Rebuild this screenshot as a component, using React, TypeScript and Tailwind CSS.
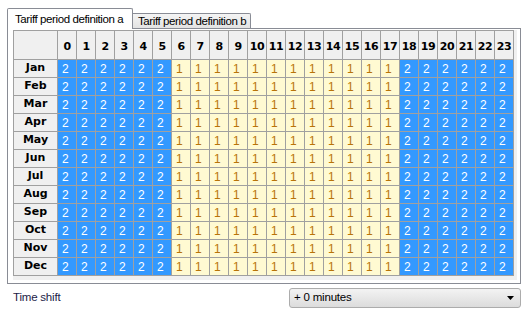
import React from 'react'

const MONTHS = ['Jan', 'Feb', 'Mar', 'Apr', 'May', 'Jun', 'Jul', 'Aug', 'Sep', 'Oct', 'Nov', 'Dec']
const HOURS = Array.from({ length: 24 }, (_, i) => i)

// hours 6..17 are period 1, the rest period 2
const periodOf = (h: number) => (h >= 6 && h <= 17 ? 1 : 2)

const UI_FONT = { fontFamily: '"Liberation Sans", Arial, sans-serif' }
const GRID_FONT = { fontFamily: '"DejaVu Sans", Verdana, sans-serif' }

const App = () => {
    return (
        <div className="w-[527px] h-[314px] bg-white overflow-hidden text-black" style={UI_FONT}>
            {/* tabs */}
            <div className="flex items-end pl-[7px] pt-[7px] h-[28px]">
                <div className="relative z-10 h-[21px] w-[126px] -mb-px bg-white border border-b-0 border-[#898c95] rounded-t-[2px] text-[11.5px] tracking-[-0.4px] pl-[7px] pt-[4px] leading-[13px]">
                    Tariff period definition a
                </div>
                <div className="h-[15px] w-[118px] bg-gradient-to-b from-[#f4f4f4] to-[#e3e3e3] border border-l-0 border-b-0 border-[#898c95] rounded-tr-[2px] text-[11.5px] tracking-[-0.4px] pl-[5px] pt-px leading-[13px]">
                    Tariff period definition b
                </div>
            </div>

            {/* tab panel */}
            <div className="ml-[7px] w-[514px] h-[256px] border border-[#898c95] bg-white pl-[5px] pt-px">
                <div className="w-[505px] h-[251px] bg-[#f0f0f0] border-r border-b border-white">
                    <div
                        className="grid grid-cols-[43px_repeat(24,18px)] grid-rows-[28px_repeat(12,17px)] gap-px bg-[#a0a0a0] border border-[#a0a0a0] w-fit"
                        style={GRID_FONT}
                    >
                        <div className="bg-[#f0f0f0]" />
                        {HOURS.map((h) => (
                            <div
                                key={`h${h}`}
                                className="bg-[#f0f0f0] flex items-center justify-center pt-[4px] text-[11px] font-bold tracking-[-0.5px]"
                            >
                                {h}
                            </div>
                        ))}
                        {MONTHS.map((m) => (
                            <React.Fragment key={m}>
                                <div className="bg-[#f0f0f0] flex items-center justify-center text-[11px] font-bold">
                                    {m}
                                </div>
                                {HOURS.map((h) => {
                                    const p = periodOf(h)
                                    return (
                                        <div
                                            key={`${m}${h}`}
                                            className={`flex items-center pl-[4px] pt-px text-[12px] ${
                                                p === 2 ? 'bg-[#3399ff] text-white' : 'bg-[#fffad2] text-[#b87408]'
                                            }`}
                                            style={UI_FONT}
                                        >
                                            {p}
                                        </div>
                                    )
                                })}
                            </React.Fragment>
                        ))}
                    </div>
                </div>
            </div>

            {/* time shift */}
            <div className="flex items-center mt-[4px] h-[20px]">
                <span className="pl-[13px] text-[11.5px] tracking-[-0.2px] text-[#1c1c48]">Time shift</span>
                <div className="ml-auto mr-[6px] w-[232px] h-[20px] border border-[#acacac] rounded-[3px] bg-gradient-to-b from-[#f3f3f3] to-[#dcdcdc] flex items-center pl-[4px] pr-[6px] text-[11.5px] tracking-[-0.2px]">
                    <span>+ 0 minutes</span>
                    <svg className="ml-auto" width="7" height="4" viewBox="0 0 7 4">
                        <path d="M0 0h7L3.5 4z" fill="#000" />
                    </svg>
                </div>
            </div>
        </div>
    )
}

export default App
